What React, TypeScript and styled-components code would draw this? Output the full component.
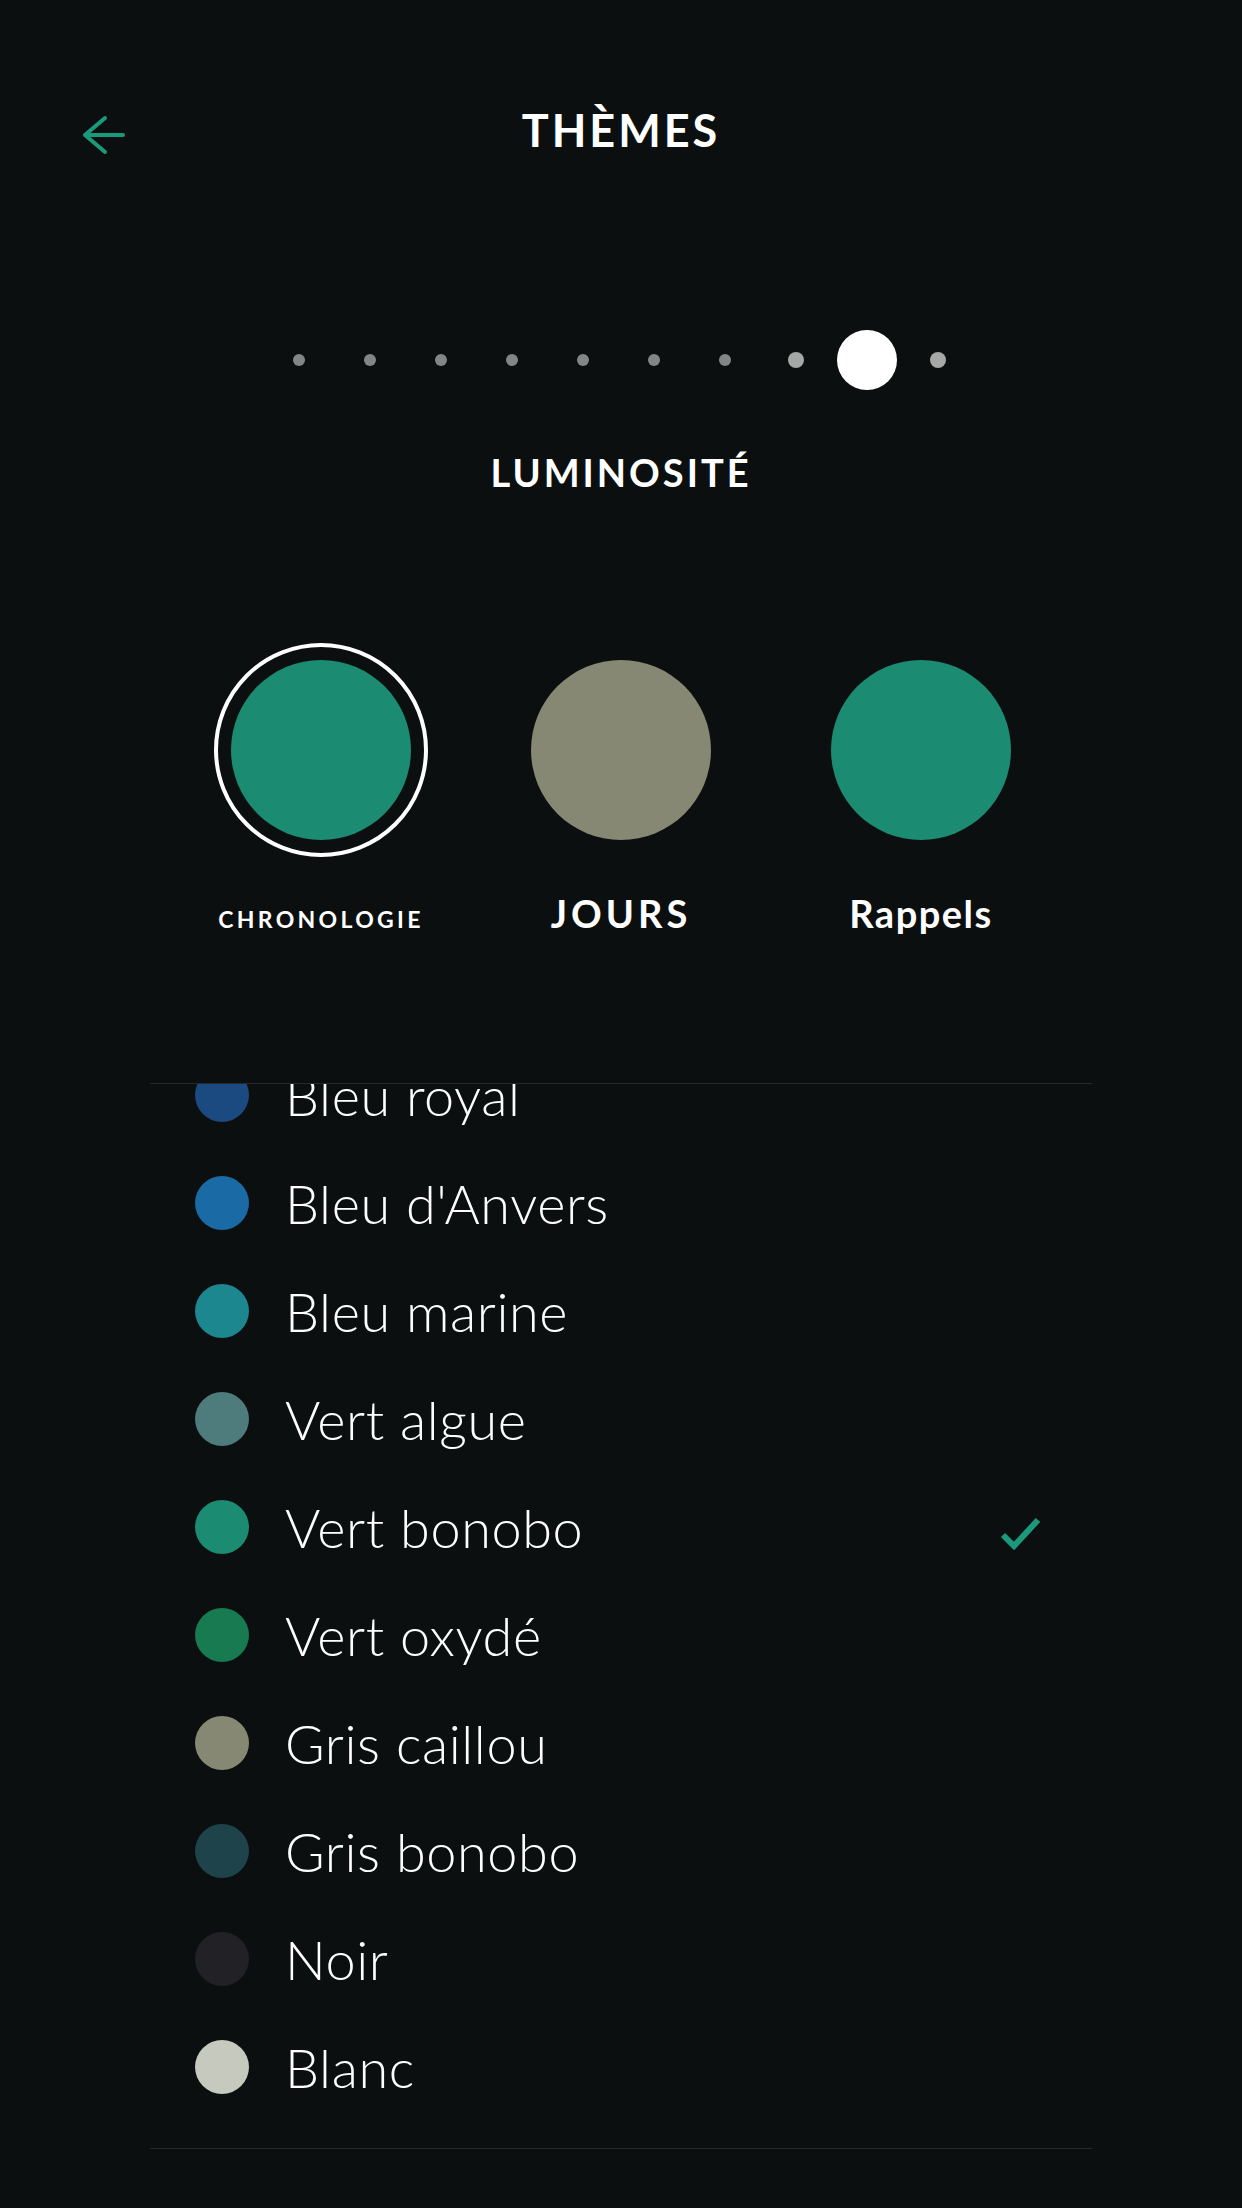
import { useLayoutEffect, useRef } from 'react';
import styled, { createGlobalStyle } from 'styled-components';

const GlobalStyle = createGlobalStyle`
  html, body {
    margin: 0;
    padding: 0;
    background: #0c0f10;
  }
  body {
    font-family: Lato, 'Open Sans', sans-serif;
    color: #ffffff;
  }
`;

const ACCENT = '#1b9a7b';

const themes = [
  { name: 'Bleu royal', color: '#1b4a80' },
  { name: "Bleu d'Anvers", color: '#1a6aa6' },
  { name: 'Bleu marine', color: '#1d8790' },
  { name: 'Vert algue', color: '#4e7b7b' },
  { name: 'Vert bonobo', color: '#1b8c72' },
  { name: 'Vert oxydé', color: '#177a50' },
  { name: 'Gris caillou', color: '#878874' },
  { name: 'Gris bonobo', color: '#1f434b' },
  { name: 'Noir', color: '#222226' },
  { name: 'Blanc', color: '#c6c9bd' },
];

const SELECTED = 'Vert bonobo';

// dot sizes of the carousel pager, active one is index 8
const pager = [12, 12, 12, 12, 12, 12, 12, 16, 60, 16];

const App = () => {
  const listRef = useRef<HTMLDivElement>(null);

  useLayoutEffect(() => {
    if (listRef.current) {
      listRef.current.scrollTop = 43;
    }
  }, []);

  return (
    <Screen>
      <GlobalStyle />
      <Header>
        <BackButton aria-label="Retour">
          <svg width="48" height="48" viewBox="0 0 48 48" fill="none">
            <path
              d="M43 24H5M25 7L5 24L25 41"
              stroke={ACCENT}
              strokeWidth="4"
              strokeLinecap="round"
              strokeLinejoin="round"
            />
          </svg>
        </BackButton>
        <Title>THÈMES</Title>
        <span />
      </Header>

      <Pager>
        {pager.map((size, i) => (
          <DotSlot key={i}>
            <Dot $size={size} />
          </DotSlot>
        ))}
      </Pager>

      <Subtitle>LUMINOSITÉ</Subtitle>

      <SwatchRow>
        <SwatchSlot $selected>
          <Swatch $color="#1b8c72" />
        </SwatchSlot>
        <SwatchSlot>
          <Swatch $color="#878874" />
        </SwatchSlot>
        <SwatchSlot>
          <Swatch $color="#1b8c72" />
        </SwatchSlot>
      </SwatchRow>
      <LabelRow>
        <SmallLabel>CHRONOLOGIE</SmallLabel>
        <BigLabel $spacing={4}>JOURS</BigLabel>
        <BigLabel $spacing={1.5}>Rappels</BigLabel>
      </LabelRow>

      <ListFrame>
        <ListScroll ref={listRef}>
          {themes.map((t) => (
            <ThemeRow key={t.name}>
              <ColorDot $color={t.color} />
              <ThemeName>{t.name}</ThemeName>
              {t.name === SELECTED && (
                <Check width="44" height="48" viewBox="0 0 44 48" fill="none">
                  <path d="M4 32L15 43L39 17" stroke={ACCENT} strokeWidth="6" />
                </Check>
              )}
            </ThemeRow>
          ))}
        </ListScroll>
      </ListFrame>
    </Screen>
  );
};

export default App;

const Screen = styled.div`
  width: 1242px;
  height: 2208px;
  overflow: hidden;
  background: #0c0f10;
  display: flex;
  flex-direction: column;
  align-items: center;
`;

const Header = styled.header`
  width: 100%;
  margin-top: 90px;
  height: 80px;
  display: grid;
  grid-template-columns: 1fr auto 1fr;
  align-items: center;
`;

const BackButton = styled.button`
  justify-self: start;
  margin: 10px 0 0 80px;
  padding: 0;
  border: 0;
  background: none;
  display: flex;
  cursor: pointer;
`;

const Title = styled.h1`
  margin: 0;
  font-size: 45px;
  line-height: 80px;
  font-weight: 700;
  letter-spacing: 3px;
  color: #ffffff;
`;

const Pager = styled.div`
  margin: 160px 6px 0 0;
  height: 60px;
  display: flex;
  align-items: center;
`;

const DotSlot = styled.div`
  width: 71px;
  display: flex;
  justify-content: center;
`;

const Dot = styled.span<{ $size: number }>`
  width: ${(p) => p.$size}px;
  height: ${(p) => p.$size}px;
  border-radius: 50%;
  background: ${(p) => (p.$size > 40 ? '#ffffff' : p.$size > 12 ? '#a6a7a7' : '#848585')};
`;

const Subtitle = styled.h2`
  margin: 59px 0 0;
  font-size: 38px;
  line-height: 46px;
  font-weight: 700;
  letter-spacing: 3px;
  color: #ffffff;
`;

const SwatchRow = styled.div`
  margin-top: 148px;
  display: grid;
  grid-template-columns: repeat(3, 300px);
  justify-items: center;
`;

const SwatchSlot = styled.div<{ $selected?: boolean }>`
  width: 214px;
  height: 214px;
  box-sizing: border-box;
  border-radius: 50%;
  border: 4px solid ${(p) => (p.$selected ? '#ffffff' : 'transparent')};
  display: flex;
  align-items: center;
  justify-content: center;
`;

const Swatch = styled.span<{ $color: string }>`
  width: 180px;
  height: 180px;
  border-radius: 50%;
  background: ${(p) => p.$color};
`;

const LabelRow = styled.div`
  margin-top: 33px;
  display: grid;
  grid-template-columns: repeat(3, 300px);
  justify-items: center;
  align-items: baseline;
`;

const SmallLabel = styled.span`
  font-size: 23px;
  line-height: 46px;
  font-weight: 700;
  letter-spacing: 3.3px;
  color: #ffffff;
`;

const BigLabel = styled.span<{ $spacing: number }>`
  font-size: 38px;
  line-height: 46px;
  font-weight: 700;
  letter-spacing: ${(p) => p.$spacing}px;
  color: #ffffff;
`;

const ListFrame = styled.div`
  margin-top: 141px;
  width: 942px;
  border-top: 1px solid #26292a;
  border-bottom: 1px solid #26292a;
`;

const ListScroll = styled.div`
  height: 1064px;
  overflow-y: auto;
  scrollbar-width: none;
  &::-webkit-scrollbar {
    display: none;
  }
`;

const ThemeRow = styled.div`
  height: 108px;
  padding: 0 49px 0 45px;
  display: flex;
  align-items: center;
  &:last-child {
    margin-bottom: 40px;
  }
`;

const ColorDot = styled.span<{ $color: string }>`
  width: 54px;
  height: 54px;
  flex-shrink: 0;
  border-radius: 50%;
  background: ${(p) => p.$color};
`;

const ThemeName = styled.span`
  margin-left: 36px;
  flex: 1;
  font-size: 54px;
  font-weight: 300;
  letter-spacing: 0.6px;
  color: #ffffff;
  white-space: nowrap;
`;

const Check = styled.svg`
  flex-shrink: 0;
`;
